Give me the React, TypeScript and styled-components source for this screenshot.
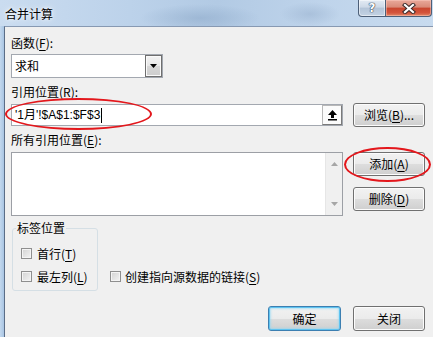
import styled, { createGlobalStyle } from "styled-components";

const GlobalStyle = createGlobalStyle`
  html, body {
    margin: 0;
    padding: 0;
    background: #f0f0f0;
  }
  body {
    width: 433px;
    height: 337px;
    overflow: hidden;
    font-family: "Noto Sans CJK SC", "Noto Sans", sans-serif;
    font-size: 12px;
    color: #000;
  }
  u {
    text-underline-offset: 2px;
  }
`;

export default function App() {
    return (
        <>
            <GlobalStyle/>
            <Window>
                <TitleBar>
                    <Title>合并计算</Title>
                    <Caption>
                        <HelpButton>?</HelpButton>
                        <CloseButton>
                            <svg width="14" height="11" viewBox="0 0 14 11">
                                <path d="M3 2 L11 9 M11 2 L3 9" stroke="#3b2a2a" strokeWidth="4.2" strokeLinecap="square"/>
                                <path d="M3 2 L11 9 M11 2 L3 9" stroke="#fff" strokeWidth="2.2" strokeLinecap="square"/>
                            </svg>
                        </CloseButton>
                    </Caption>
                </TitleBar>
                <Body>
                    <LeftFrame/>
                    <Content>
                        <FieldLabel $top={8}>函数(<u>F</u>):</FieldLabel>
                        <Combo>
                            <ComboText>求和</ComboText>
                            <DropButton>
                                <svg width="7" height="4" viewBox="0 0 7 4">
                                    <polygon points="0,0 7,0 3.5,4" fill="#000"/>
                                </svg>
                            </DropButton>
                        </Combo>

                        <FieldLabel $top={6}>引用位置(<u>R</u>):</FieldLabel>
                        <InputRow>
                            <RefInput>
                                <RefText>'1月'!$A$1:$F$3<Caret/></RefText>
                                <CollapseButton>
                                    <svg width="11" height="12" viewBox="0 0 11 12">
                                        <polygon points="5.5,1 1,6 4,6 4,9 7,9 7,6 10,6" fill="#000"/>
                                        <rect x="1" y="10" width="9" height="1.5" fill="#000"/>
                                    </svg>
                                </CollapseButton>
                            </RefInput>
                            <Button $w={72} $h={24}>浏览(<u>B</u>)...</Button>
                        </InputRow>

                        <FieldLabel $top={5}>所有引用位置(<u>E</u>):</FieldLabel>
                        <ListRow>
                            <ListBox>
                                <ListArea/>
                                <ScrollBar>
                                    <svg width="7" height="4" viewBox="0 0 7 4">
                                        <polygon points="0,4 7,4 3.5,0" fill="#a6a6a6"/>
                                    </svg>
                                    <svg width="7" height="4" viewBox="0 0 7 4">
                                        <polygon points="0,0 7,0 3.5,4" fill="#a6a6a6"/>
                                    </svg>
                                </ScrollBar>
                            </ListBox>
                            <ButtonColumn>
                                <Button $w={72} $h={24}>添加(<u>A</u>)</Button>
                                <Button $w={72} $h={24}>删除(<u>D</u>)</Button>
                            </ButtonColumn>
                        </ListRow>

                        <OptionsRow>
                            <GroupBox>
                                <Legend>标签位置</Legend>
                                <CheckList>
                                    <CheckItem>
                                        <CheckBox/>
                                        <span>首行(<u>T</u>)</span>
                                    </CheckItem>
                                    <CheckItem>
                                        <CheckBox/>
                                        <span>最左列(<u>L</u>)</span>
                                    </CheckItem>
                                </CheckList>
                            </GroupBox>
                            <LinkItem>
                                <CheckBox/>
                                <span>创建指向源数据的链接(<u>S</u>)</span>
                            </LinkItem>
                        </OptionsRow>

                        <Footer>
                            <Button $w={73} $h={25} $primary>确定</Button>
                            <Button $w={72} $h={25}>关闭</Button>
                        </Footer>
                    </Content>
                </Body>

                {/* red annotation marks drawn over the dialog */}
                <Ellipse $left={5} $top={98} $w={147} $h={32}/>
                <Ellipse $left={344} $top={147} $w={87} $h={35}/>
            </Window>
        </>
    );
}

const Window = styled.div`
    position: relative;
    width: 433px;
    height: 337px;
    display: flex;
    flex-direction: column;
    overflow: hidden;
`

const TitleBar = styled.div`
    height: 26px;
    flex: none;
    display: flex;
    justify-content: space-between;
    align-items: flex-start;
    background:
        radial-gradient(ellipse 60px 14px at 200px 18px, rgba(140, 168, 200, 0.55), transparent),
        radial-gradient(ellipse 30px 12px at 310px 14px, rgba(150, 175, 205, 0.5), transparent),
        linear-gradient(to right, #cadcf0 0%, #bcd2ea 30%, #b2cae4 50%, #bfd4eb 75%, #c8dbef 100%);
`

const Title = styled.div`
    margin: 6px 0 0 5px;
    line-height: 16px;
    font-size: 12px;
    text-shadow: 0 0 6px rgba(255, 255, 255, 0.9), 0 0 3px rgba(255, 255, 255, 0.9);
`

const Caption = styled.div`
    display: flex;
    margin-right: 1px;
`

const CaptionButton = styled.div`
    height: 17px;
    box-sizing: border-box;
    border: 1px solid #4d5f78;
    border-top: none;
    display: flex;
    align-items: center;
    justify-content: center;
`

const HelpButton = styled(CaptionButton)`
    width: 28px;
    border-bottom-left-radius: 4px;
    background: linear-gradient(#e3ebf4 0%, #cdd9e7 45%, #b3c4d8 50%, #c3d2e3 100%);
    box-shadow: inset 0 0 0 1px rgba(255, 255, 255, 0.5);
    font-family: "DejaVu Sans", sans-serif;
    font-weight: bold;
    font-size: 12px;
    color: #fff;
    text-shadow: 0 0 1px #2b3a50, 0 0 1px #2b3a50, 0 0 1px #2b3a50;
`

const CloseButton = styled(CaptionButton)`
    width: 46px;
    border-left: none;
    border-bottom-right-radius: 4px;
    background: linear-gradient(#e9a99b 0%, #d98a78 45%, #c8462f 50%, #d4543c 80%, #e08a6a 100%);
    box-shadow: inset 0 0 0 1px rgba(255, 210, 200, 0.45);
`

const Body = styled.div`
    flex: 1;
    display: flex;
    min-height: 0;
`

const LeftFrame = styled.div`
    width: 4px;
    flex: none;
    background: linear-gradient(to right, #c3d8ee, #a9c5e3);
`

const Content = styled.div`
    flex: 1;
    display: flex;
    flex-direction: column;
    background: #f0f0f0;
    border-left: 1px solid #5b6d87;
    border-top: 1px solid #8799b2;
    padding: 0 8px 0 6px;
`

const FieldLabel = styled.div<{ $top: number }>`
    margin-top: ${p => p.$top}px;
    height: 16px;
    line-height: 16px;
`

const Combo = styled.div`
    margin-top: 3px;
    width: 152px;
    height: 24px;
    box-sizing: border-box;
    border: 1px solid #a3a8b0;
    background: #fff;
    display: flex;
    align-items: center;
    justify-content: space-between;
`

const ComboText = styled.span`
    padding-left: 3px;
    line-height: 16px;
`

const DropButton = styled.div`
    width: 17px;
    height: 22px;
    box-sizing: border-box;
    border: 1px solid #6f6f6f;
    background: linear-gradient(#f3f3f3 0%, #e6e6e6 50%, #d6d6d6 51%, #cdcdcd 100%);
    box-shadow: inset 0 0 0 1px #fafafa;
    display: flex;
    align-items: center;
    justify-content: center;
`

const InputRow = styled.div`
    margin-top: 3px;
    height: 24px;
    display: flex;
    align-items: center;
    gap: 10px;
`

const RefInput = styled.div`
    width: 332px;
    height: 22px;
    box-sizing: border-box;
    border: 1px solid #a3a8b0;
    background: #fff;
    display: flex;
    align-items: center;
    justify-content: space-between;
    padding: 0 0 0 3px;
`

const RefText = styled.span`
    font-family: "Liberation Sans", "Noto Sans CJK SC", sans-serif;
    line-height: 16px;
    display: flex;
    align-items: center;
    white-space: pre;
`

const Caret = styled.span`
    display: inline-block;
    width: 1px;
    height: 15px;
    margin-left: 1px;
    background: #000;
`

const CollapseButton = styled.div`
    width: 20px;
    height: 20px;
    box-sizing: border-box;
    border: 1px solid #b8b8b8;
    border-right-color: #7a7a7a;
    border-bottom-color: #7a7a7a;
    background: #fbfbfb;
    display: flex;
    align-items: center;
    justify-content: center;
`

const Button = styled.div<{ $w: number; $h: number; $primary?: boolean }>`
    width: ${p => p.$w}px;
    height: ${p => p.$h}px;
    flex: none;
    box-sizing: border-box;
    border: 1px solid ${p => (p.$primary ? "#3c7fb1" : "#707070")};
    border-radius: 3px;
    background: linear-gradient(#f2f2f2 0%, #ebebeb 50%, #dddddd 51%, #cfcfcf 100%);
    box-shadow: ${p => (p.$primary
        ? "inset 0 0 0 1px #5fc3f0, inset 0 0 2px 2px rgba(140, 215, 245, 0.6)"
        : "inset 0 0 0 1px #fcfcfc")};
    display: flex;
    align-items: center;
    justify-content: center;
    line-height: 16px;
    white-space: nowrap;
`

const ListRow = styled.div`
    margin-top: 4px;
    display: flex;
    align-items: flex-start;
    gap: 10px;
`

const ListBox = styled.div`
    width: 332px;
    height: 64px;
    box-sizing: border-box;
    border: 1px solid #9c9fa5;
    display: flex;
    background: #fff;
`

const ListArea = styled.div`
    flex: 1;
`

const ScrollBar = styled.div`
    width: 17px;
    box-sizing: border-box;
    background: #f0f0f0;
    border-left: 1px solid #e6e6e6;
    display: flex;
    flex-direction: column;
    align-items: center;
    justify-content: space-between;
    padding: 9px 0 9px;
`

const ButtonColumn = styled.div`
    display: flex;
    flex-direction: column;
    gap: 11px;
`

const OptionsRow = styled.div`
    margin-top: 4px;
    display: flex;
    align-items: flex-end;
`

const GroupBox = styled.fieldset`
    margin: 0 0 0 1px;
    width: 86px;
    box-sizing: border-box;
    padding: 9px 6px 6px 8px;
    border: 1px solid #d5dfe5;
    border-radius: 3px;
    min-width: 0;
`

const Legend = styled.legend`
    margin-left: -5px;
    padding: 0 1px;
    line-height: 16px;
`

const CheckList = styled.div`
    display: flex;
    flex-direction: column;
    gap: 7px;
`

const CheckItem = styled.div`
    height: 16px;
    display: flex;
    align-items: center;
    gap: 5px;
    white-space: nowrap;
`

const LinkItem = styled(CheckItem)`
    margin: 0 0 7px 12px;
    gap: 4px;
`

const CheckBox = styled.span`
    width: 11px;
    height: 11px;
    flex: none;
    box-sizing: border-box;
    border: 1px solid #8f8f8f;
    background: linear-gradient(135deg, #d2d2d2, #f4f4f4);
    box-shadow: inset 0 0 0 1px #f4f4f4;
`

const Footer = styled.div`
    margin-top: 15px;
    display: flex;
    justify-content: flex-end;
    gap: 12px;
`

const Ellipse = styled.div<{ $left: number; $top: number; $w: number; $h: number }>`
    position: absolute;
    left: ${p => p.$left}px;
    top: ${p => p.$top}px;
    width: ${p => p.$w}px;
    height: ${p => p.$h}px;
    box-sizing: border-box;
    border: 2px solid #e3171c;
    border-radius: 50%;
    pointer-events: none;
`
